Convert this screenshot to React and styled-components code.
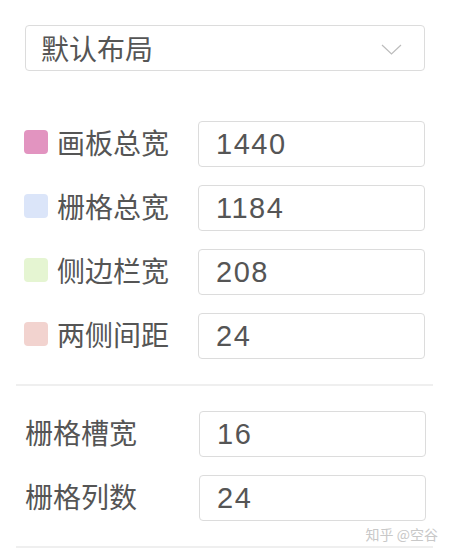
import React from 'react';
import styled, { createGlobalStyle } from 'styled-components';

const GlobalStyle = createGlobalStyle`
  * {
    margin: 0;
    padding: 0;
    box-sizing: border-box;
  }

  body {
    background: #ffffff;
    font-family: "Liberation Sans", "Noto Sans CJK SC", sans-serif;
    color: #555555;
  }
`;

const Panel = styled.div`
  position: relative;
  width: 450px;
  height: 554px;
  padding: 25px 17px 0 16px;
`;

const Select = styled.div`
  margin: 0 8px 0 9px;
  height: 46px;
  border: 1.5px solid #dcdcdc;
  border-radius: 4px;
  display: flex;
  align-items: center;
  justify-content: space-between;
  padding: 0 22px 0 15px;
  font-size: 28px;
  color: #555555;
`;

const Chevron = styled.svg`
  width: 21px;
  height: 11px;
  margin-top: 2px;
`;

const Section = styled.div`
  display: flex;
  flex-direction: column;
  gap: 18px;
  padding: ${p => p.$pad};
`;

const Row = styled.div`
  display: flex;
  align-items: center;
  height: 46px;
`;

const Swatch = styled.span`
  width: 24px;
  height: 24px;
  border-radius: 4px;
  background: ${p => p.$color};
  margin-right: 9px;
  flex-shrink: 0;
  margin-top: -4px;
`;

const Label = styled.span`
  font-size: 28px;
  color: #555555;
  width: ${p => (p.$plain ? '174px' : '141px')};
  flex-shrink: 0;
  margin-top: -5px;
  margin-left: ${p => (p.$plain ? '9px' : '0')};
`;

const Input = styled.div`
  width: 227px;
  height: 46px;
  border: 1.5px solid #dcdcdc;
  border-radius: 4px;
  display: flex;
  align-items: center;
  padding-left: 17px;
  font-size: 29px;
  letter-spacing: 1.5px;
  color: #555555;
`;

const Divider = styled.hr`
  border: none;
  border-top: 2px solid #efefef;
  margin: 0;
  width: 417px;
`;

const Watermark = styled.span`
  position: absolute;
  right: 12px;
  bottom: 10px;
  font-size: 14px;
  color: #c8c8c8;
  font-family: "Noto Sans CJK SC", sans-serif;
`;

const colored = [
  { color: '#e294c0', label: '画板总宽', value: '1440' },
  { color: '#dbe5f9', label: '栅格总宽', value: '1184' },
  { color: '#e5f5d2', label: '侧边栏宽', value: '208' },
  { color: '#f2d3cf', label: '两侧间距', value: '24' },
];

const plain = [
  { label: '栅格槽宽', value: '16' },
  { label: '栅格列数', value: '24' },
];

export default function App() {
  return (
    <>
      <GlobalStyle />
      <Panel>
        <Select>
          <span>默认布局</span>
          <Chevron viewBox="0 0 21 11" fill="none">
            <path d="M1 1 L10.5 10 L20 1" stroke="#bcbcbc" strokeWidth="1.2" />
          </Chevron>
        </Select>
        <Section $pad="50px 0 25px 8px">
          {colored.map(r => (
            <Row key={r.label}>
              <Swatch $color={r.color} />
              <Label>{r.label}</Label>
              <Input>{r.value}</Input>
            </Row>
          ))}
        </Section>
        <Divider />
        <Section $pad="25px 0 25px 0">
          {plain.map(r => (
            <Row key={r.label}>
              <Label $plain>{r.label}</Label>
              <Input>{r.value}</Input>
            </Row>
          ))}
        </Section>
        <Divider />
        <Watermark>知乎 @空谷</Watermark>
      </Panel>
    </>
  );
}
